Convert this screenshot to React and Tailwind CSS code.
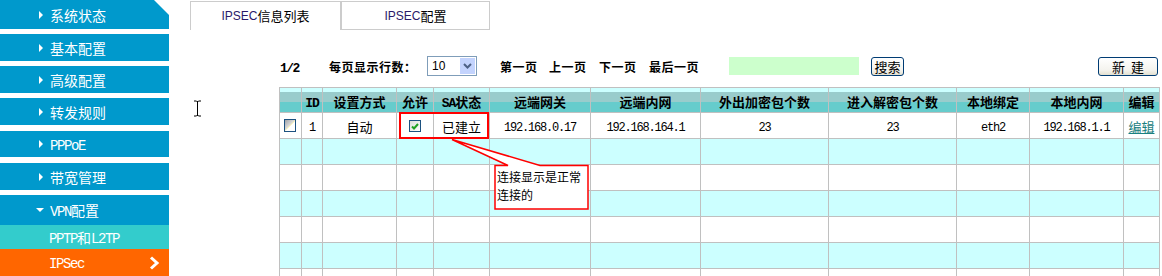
import React from "react";

// splits a string into ascii / cjk runs so each gets its own font
function Mixed({ text, ascii, cjk }) {
  return text
    .split(/([\x20-\x7e]+)/)
    .filter(Boolean)
    .map((s, i) =>
      /^[\x20-\x7e]+$/.test(s) ? (
        <span key={i} className={ascii}>{s}</span>
      ) : (
        <span key={i} className={cjk}>{s}</span>
      )
    );
}

const navAscii = "font-['Liberation_Mono',monospace] text-[14px] tracking-[-1.4px]";
const navCjk = "font-['Noto_Sans_CJK_SC',sans-serif] text-[14px]";

function NavItem({ label, className, arrow = "right" }) {
  return (
    <div className={`flex items-center bg-[#0099cc] text-white shrink-0 ${className}`}>
      {arrow === "right" ? (
        <span className="ml-[39px] w-0 h-0 border-y-[4px] border-y-transparent border-l-[4px] border-l-white" />
      ) : (
        <span className="ml-[36px] w-0 h-0 border-x-[4px] border-x-transparent border-t-[4px] border-t-white" />
      )}
      <span className={arrow === "right" ? "ml-[7px] leading-none" : "ml-[6px] leading-none"}>
        <Mixed text={label} ascii={navAscii} cjk={navCjk} />
      </span>
    </div>
  );
}

function Sidebar() {
  return (
    <div className="w-[169px] h-full flex flex-col shrink-0">
      <NavItem label="系统状态" className="h-[29px] [clip-path:polygon(0_0,154px_0,169px_15px,169px_100%,0_100%)]" />
      <NavItem label="基本配置" className="mt-[5px] h-[27px]" />
      <NavItem label="高级配置" className="mt-[5px] h-[27px]" />
      <NavItem label="转发规则" className="mt-[5px] h-[27px]" />
      <NavItem label="PPPoE" className="mt-[6px] h-[26px]" />
      <NavItem label="带宽管理" className="mt-[6px] h-[27px]" />
      <NavItem label="VPN配置" arrow="down" className="mt-[5px] h-[30px]" />
      <div className="h-[24px] bg-[#33cccc] text-white flex items-center pl-[49px] shrink-0">
        <span className="leading-none">
          <Mixed text="PPTP和L2TP" ascii={navAscii} cjk={navCjk} />
        </span>
      </div>
      <div className="h-[27px] bg-[#ff6600] text-white flex items-center pl-[49px] pr-[9px] shrink-0">
        <span className={`${navAscii} leading-none mt-[3px]`}>IPSec</span>
        <svg className="ml-auto mt-[1px]" width="11" height="14" viewBox="0 0 11 14">
          <path d="M2 1.5 L8 7 L2 12.5" fill="none" stroke="white" strokeWidth="3" />
        </svg>
      </div>
    </div>
  );
}

const tbCjk = "font-['Noto_Sans_CJK_SC',sans-serif] text-[12px] font-bold tracking-[0.5px]";
const tbAscii = "font-['Liberation_Mono',monospace] text-[13px] font-bold tracking-[-1.5px]";

function Button({ children, className }) {
  return (
    <div
      className={`h-[19px] border border-[#003c74] rounded-[3px] bg-[linear-gradient(to_bottom,#ffffff_0%,#f4f3ee_70%,#e3e0d0_100%)] flex items-center justify-center font-['Noto_Sans_CJK_SC',sans-serif] text-[13px] text-black leading-none ${className}`}
    >
      {children}
    </div>
  );
}

function Toolbar() {
  return (
    <div className="shrink-0 mt-[26px] ml-[110px] w-[880px] h-[20px] flex items-center text-black">
      <div className="w-[50px] pl-[1px]">
        <span className={tbAscii}>1/2</span>
      </div>
      <div className="w-[98px]">
        <span className={tbCjk}>每页显示行数：</span>
      </div>
      <div className="w-[50px] h-[20px] border border-[#7f9db9] flex items-center bg-white">
        <span className="ml-[4px] font-['Liberation_Sans',sans-serif] text-[12px] leading-none">10</span>
        <div className="ml-auto mr-[1px] w-[15px] h-[16px] bg-[#c3d3fd] flex items-center justify-center">
          <svg width="9" height="6" viewBox="0 0 9 6">
            <path d="M1 1 L4.5 4.5 L8 1" fill="none" stroke="#4d6185" strokeWidth="2" />
          </svg>
        </div>
      </div>
      <div className="ml-[23px] w-[49px]"><span className={tbCjk}>第一页</span></div>
      <div className="w-[50px]"><span className={tbCjk}>上一页</span></div>
      <div className="w-[50px]"><span className={tbCjk}>下一页</span></div>
      <div className="w-[80px]"><span className={tbCjk}>最后一页</span></div>
      <div className="w-[130px] h-[18px] bg-[#ccffcc]" />
      <Button className="ml-[12px] w-[33px]">搜索</Button>
      <Button className="ml-auto mr-[1px] w-[60px]">新&nbsp;&nbsp;建</Button>
    </div>
  );
}

const cols = [22, 21, 74, 37, 56, 101, 110, 128, 128, 73, 94, 36];
const heads = ["", "ID", "设置方式", "允许", "SA状态", "远端网关", "远端内网", "外出加密包个数", "进入解密包个数", "本地绑定", "本地内网", "编辑"];
const hAscii = "font-['Liberation_Mono',monospace] text-[13px] font-bold tracking-[-1px]";
const hCjk = "font-['Noto_Sans_CJK_SC',sans-serif] text-[13px] font-bold";
const dAscii = "font-['Liberation_Mono',monospace] text-[12px] tracking-[-1.2px]";
const dCjk = "font-['Noto_Sans_CJK_SC',sans-serif] text-[13px]";

function Table() {
  const row1 = ["1", "自动", null, "已建立", "192.168.0.17", "192.168.164.1", "23", "23", "eth2", "192.168.1.1"];
  return (
    <table className="shrink-0 mt-[11px] ml-[110px] w-[880px] table-fixed border-collapse">
      <colgroup>
        {cols.map((w, i) => (
          <col key={i} style={{ width: w }} />
        ))}
      </colgroup>
      <thead>
        <tr className="h-[25px] bg-[linear-gradient(to_bottom,#ccffff_0px,#ccffff_4px,#99cccc_4px,#99cccc_14px,#66cccc_14px)]">
          {heads.map((h, i) => (
            <th key={i} className="border border-[#c0c0c0] p-0 text-center text-black leading-none align-middle">
              <span className="relative top-[1px]">
                <Mixed text={h} ascii={hAscii} cjk={hCjk} />
              </span>
            </th>
          ))}
        </tr>
      </thead>
      <tbody>
        <tr className="h-[26px] bg-white">
          <td className="border border-[#c0c0c0] p-0 align-middle">
            <div className="ml-[4px] w-[12px] h-[13px] border border-[#1c5180] bg-[linear-gradient(135deg,#9fa2a6_0%,#d8d8d8_45%,#f5efb0_50%,#ffffff_56%)]" />
          </td>
          {row1.map((c, i) => (
            <td key={i} className="border border-[#c0c0c0] p-0 text-center text-black leading-none align-middle">
              {c === null ? (
                <div className="mx-auto mt-[1px] w-[12px] h-[12px] border border-[#1c5180] bg-[linear-gradient(135deg,#dcdcd7,#ffffff)] flex items-center justify-center">
                  <svg width="8" height="7" viewBox="0 0 8 7">
                    <path d="M1 3.5 L3 5.5 L7 1" fill="none" stroke="#21a121" strokeWidth="2" />
                  </svg>
                </div>
              ) : (
                <Mixed text={c} ascii={dAscii} cjk={dCjk} />
              )}
            </td>
          ))}
          <td className="border border-[#c0c0c0] p-0 text-center leading-none align-middle">
            <span className={`${dCjk} text-[#1a8080] underline`}>编辑</span>
          </td>
        </tr>
        {[1, 2, 3, 4, 5, 6].map((r) => (
          <tr key={r} className={r % 2 === 1 ? "h-[26px] bg-[#ccffff]" : "h-[26px] bg-white"}>
            {cols.map((_, i) => (
              <td key={i} className="border border-[#c0c0c0] p-0" />
            ))}
          </tr>
        ))}
      </tbody>
    </table>
  );
}

export default function App() {
  return (
    <div className="relative w-[1162px] h-[276px] overflow-hidden bg-white flex">
      <Sidebar />
      <div className="flex-1 flex flex-col min-w-0">
        <div className="shrink-0 mt-[1px] ml-[21px] flex h-[29px] font-['Liberation_Sans','Noto_Sans_CJK_SC',sans-serif] text-[12px] text-black">
          <div className="w-[150px] border-l border-t border-[#cccccc] flex items-center justify-center">
            <Mixed text="IPSEC信息列表" ascii="text-[#2a1a6a]" cjk="font-['Noto_Sans_CJK_SC',sans-serif] text-[13px]" />
          </div>
          <div className="w-[150px] border-l-2 border-t border-r border-b border-[#cccccc] flex items-center justify-center">
            <Mixed text="IPSEC配置" ascii="text-[#2a1a6a]" cjk="font-['Noto_Sans_CJK_SC',sans-serif] text-[13px]" />
          </div>
        </div>
        <Toolbar />
        <Table />
      </div>

      {/* mouse cursor left in the screenshot */}
      <svg className="absolute left-[193px] top-[100px] pointer-events-none" width="9" height="17" viewBox="0 0 9 17">
        <path d="M1 1 H3.5 M5.5 1 H8 M4.5 1.5 V15.5 M1 16 H3.5 M5.5 16 H8 M3.5 1.5 H5.5 M3.5 15.5 H5.5" stroke="black" strokeWidth="1" fill="none" />
      </svg>

      {/* annotation */}
      <div className="absolute left-[399px] top-[112px] w-[90px] h-[27px] border-2 border-[#ff0000] pointer-events-none" />
      <svg className="absolute left-0 top-0 pointer-events-none" width="1162" height="276">
        <path d="M495 165.5 L508 165.5 L452 139.5 L540 165.5 L588 165.5 L588 209 L495 209 Z" fill="white" stroke="#ff0000" strokeWidth="1.5" />
      </svg>
      <div className="absolute left-[497px] top-[168px] w-[90px] font-['Noto_Sans_CJK_SC',sans-serif] text-[12px] leading-[18px] text-black">
        连接显示是正常
        <br />
        连接的
      </div>
    </div>
  );
}
